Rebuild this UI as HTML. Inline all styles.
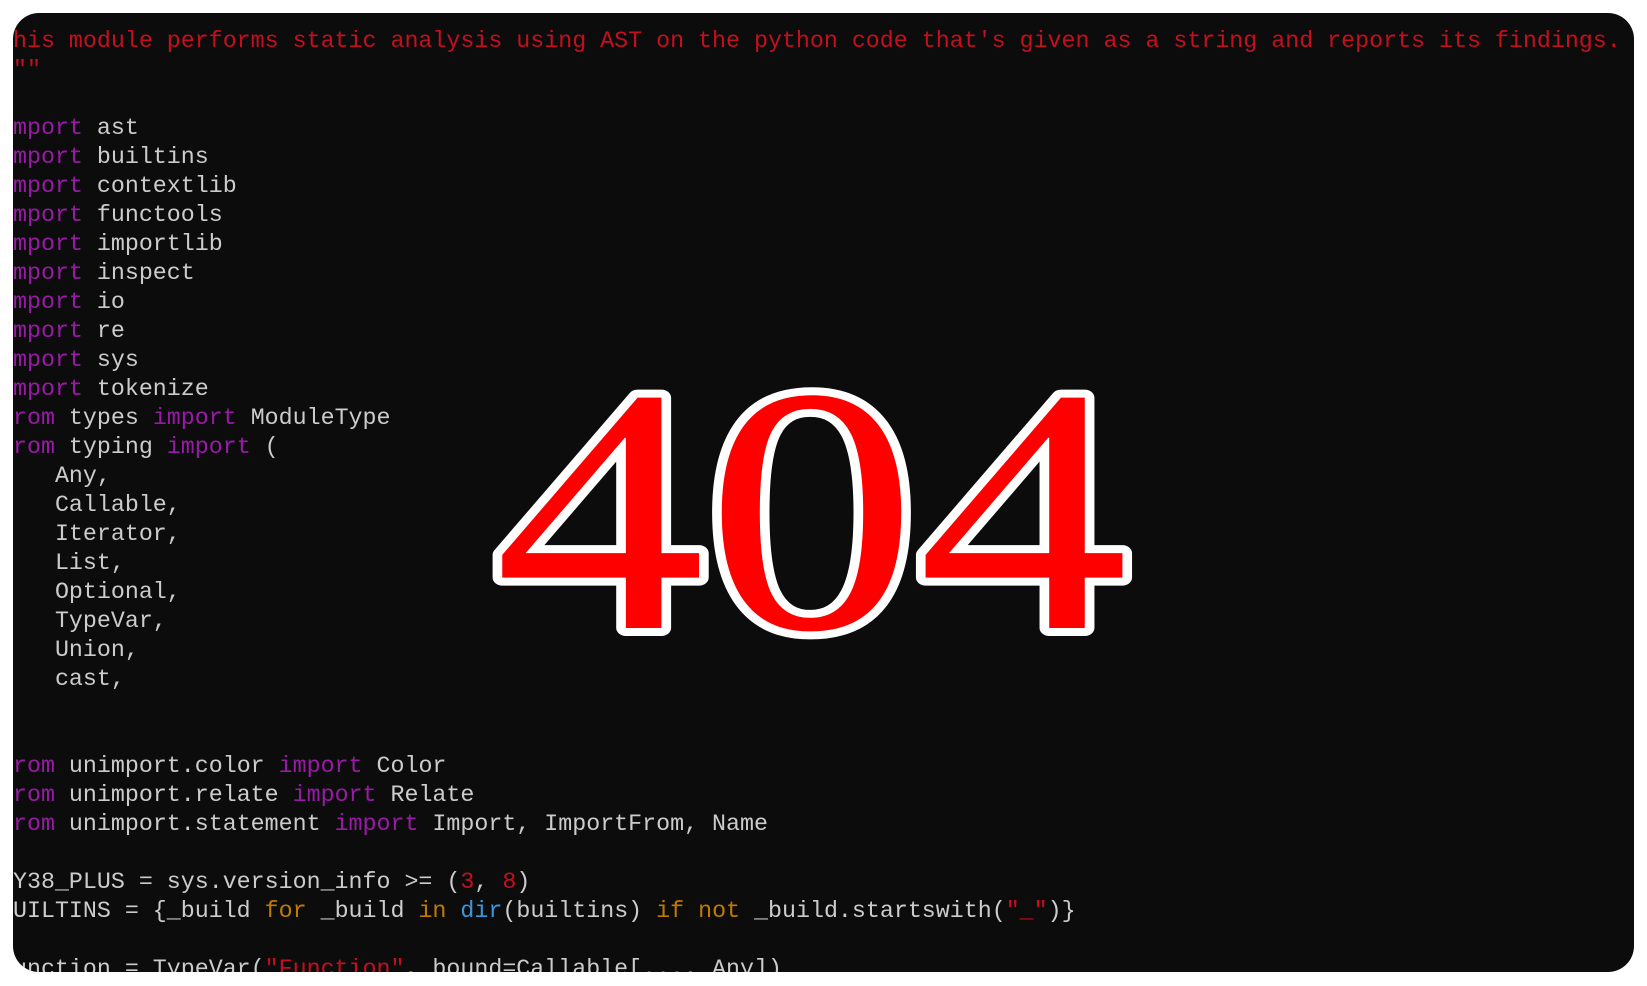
<!DOCTYPE html>
<html><head><meta charset="utf-8"><style>
html,body{margin:0;padding:0;background:#fff;width:1647px;height:986px;overflow:hidden}
.panel{position:absolute;left:13px;top:13px;width:1621px;height:959px;background:#0c0c0c;border-radius:26px;overflow:hidden}
pre{margin:0;position:absolute;left:0;top:14px;font-family:"Liberation Mono",monospace;font-size:23.3px;line-height:29px;color:#cccccc;white-space:pre}
.r{color:#c50f1f}.p{color:#9a1aa8}.o{color:#c07a00}.b{color:#3a96dd}
svg{position:absolute;left:0;top:0}
</style></head><body>
<div class="panel">
<pre><span class="r">his module performs static analysis using AST on the python code that's given as a string and reports its findings.
""</span>

<span class="p">mport</span> ast
<span class="p">mport</span> builtins
<span class="p">mport</span> contextlib
<span class="p">mport</span> functools
<span class="p">mport</span> importlib
<span class="p">mport</span> inspect
<span class="p">mport</span> io
<span class="p">mport</span> re
<span class="p">mport</span> sys
<span class="p">mport</span> tokenize
<span class="p">rom</span> types <span class="p">import</span> ModuleType
<span class="p">rom</span> typing <span class="p">import</span> (
   Any,
   Callable,
   Iterator,
   List,
   Optional,
   TypeVar,
   Union,
   cast,


<span class="p">rom</span> unimport.color <span class="p">import</span> Color
<span class="p">rom</span> unimport.relate <span class="p">import</span> Relate
<span class="p">rom</span> unimport.statement <span class="p">import</span> Import, ImportFrom, Name

Y38_PLUS = sys.version_info &gt;= (<span class="r">3</span>, <span class="r">8</span>)
UILTINS = {_build <span class="o">for</span> _build <span class="o">in</span> <span class="b">dir</span>(builtins) <span class="o">if</span> <span class="o">not</span> _build.startswith(<span class="r">"_"</span>)}

unction = TypeVar(<span class="r">"Function"</span>, bound=Callable[..., Any])</pre>
</div>
<svg width="1647" height="986" viewBox="0 0 1647 986">
<text x="494" y="628" textLength="635" lengthAdjust="spacingAndGlyphs" font-family="Liberation Serif, serif" font-size="350" fill="#ff0000" stroke="#ffffff" stroke-width="16" stroke-linejoin="round" paint-order="stroke">404</text>
</svg>
</body></html>
